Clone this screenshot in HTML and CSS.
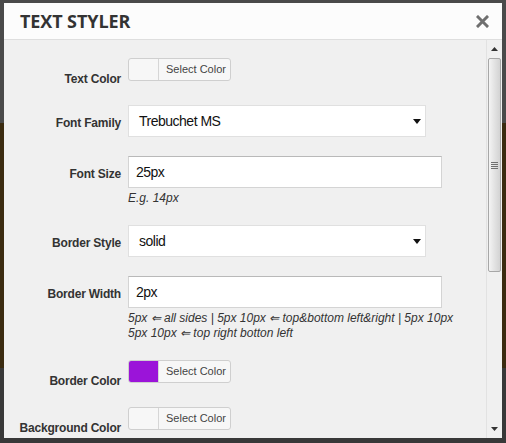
FILE: index.html
```html
<!DOCTYPE html>
<html>
<head>
<meta charset="utf-8">
<link rel="stylesheet" href="styles.css">
</head>
<body>
<div class="modal">
  <div class="modal-header">
    <h1 class="title">TEXT STYLER</h1>
    <svg class="close" width="13" height="13" viewBox="0 0 13 13"><path d="M2 2 L11 11 M11 2 L2 11" stroke="#6f6f6f" stroke-width="3" stroke-linecap="square"/></svg>
  </div>
  <div class="modal-body">
    <div class="form">
      <div class="row">
        <label class="label label-color">Text Color</label>
        <div class="control">
          <div class="picker"><span class="swatch"></span><span class="picker-text">Select Color</span></div>
        </div>
      </div>
      <div class="row">
        <label class="label">Font Family</label>
        <div class="control">
          <div class="select"><span>Trebuchet MS</span><svg width="8" height="5" viewBox="0 0 8 5"><path d="M0 0 H8 L4 5 Z" fill="#111"/></svg></div>
        </div>
      </div>
      <div class="row">
        <label class="label">Font Size</label>
        <div class="control">
          <div class="input">25px</div>
          <p class="help">E.g. 14px</p>
        </div>
      </div>
      <div class="row">
        <label class="label">Border Style</label>
        <div class="control">
          <div class="select"><span>solid</span><svg width="8" height="5" viewBox="0 0 8 5"><path d="M0 0 H8 L4 5 Z" fill="#111"/></svg></div>
        </div>
      </div>
      <div class="row">
        <label class="label">Border Width</label>
        <div class="control">
          <div class="input">2px</div>
          <p class="help">5px &lArr; all sides | 5px 10px &lArr; top&amp;bottom left&amp;right | 5px 10px<br>5px 10px &lArr; top right botton left</p>
        </div>
      </div>
      <div class="row">
        <label class="label label-color">Border Color</label>
        <div class="control">
          <div class="picker"><span class="swatch swatch-purple"></span><span class="picker-text">Select Color</span></div>
        </div>
      </div>
      <div class="row">
        <label class="label label-color">Background Color</label>
        <div class="control">
          <div class="picker"><span class="swatch"></span><span class="picker-text">Select Color</span></div>
        </div>
      </div>
    </div>
    <div class="scrollbar">
      <div class="sb-btn"><svg width="7" height="4" viewBox="0 0 7 4"><path d="M0 4 H7 L3.5 0 Z" fill="#333"/></svg></div>
      <div class="sb-thumb"><span class="grip"></span></div>
      <div class="sb-track"></div>
      <div class="sb-btn"><svg width="7" height="4" viewBox="0 0 7 4"><path d="M0 0 H7 L3.5 4 Z" fill="#333"/></svg></div>
    </div>
  </div>
</div>
</body>
</html>
```
FILE: styles.css
```css
html, body {
  margin: 0;
  padding: 0;
}
body {
  width: 506px;
  height: 443px;
  overflow: hidden;
  background: linear-gradient(to bottom, #4a4a4a 0, #4a4a4a 123px, #3b2b10 123px, #3b2b10 368px, #383838 368px);
  font-family: "Liberation Sans", Arial, sans-serif;
  padding-top: 3px;
  box-sizing: border-box;
}
.modal {
  margin: 0 4px;
  width: 498px;
  height: 435px;
  background: #f0f0f0;
  display: flex;
  flex-direction: column;
}
.modal-header {
  height: 36px;
  flex: none;
  background: #fcfcfc;
  border-bottom: 1px solid #dedede;
  display: flex;
  align-items: center;
  justify-content: space-between;
  padding: 0 13px 0 16px;
}
.title {
  margin: 0;
  font-family: "Open Sans", sans-serif;
  font-weight: 700;
  font-size: 18px;
  color: #333;
  letter-spacing: -0.1px;
}
.close {
  display: block;
  margin-top: 1px;
}
.modal-body {
  flex: 1;
  display: flex;
  min-height: 0;
}
.form {
  flex: 1;
  padding-top: 18px;
}
.row {
  display: grid;
  grid-template-columns: 117px 1fr;
  column-gap: 7px;
  margin-bottom: 19px;
}
.label {
  text-align: right;
  font-weight: 700;
  font-size: 12px;
  line-height: 17px;
  letter-spacing: -0.2px;
  color: #333;
  padding-top: 10px;
}
.label-color {
  padding-top: 13px;
  margin-bottom: -2px;
}
.control {
  display: flex;
  flex-direction: column;
  align-items: flex-start;
}
.picker {
  display: flex;
  height: 23px;
  box-sizing: border-box;
  border: 1px solid #cfcfcf;
  border-radius: 3px;
  background: #f7f7f7;
}
.swatch {
  width: 29px;
  border-right: 1px solid #d6d6d6;
  border-radius: 2px 0 0 2px;
}
.swatch-purple {
  background: #9b14d9;
}
.picker-text {
  padding: 0 4px 0 7px;
  font-size: 11px;
  line-height: 21px;
  color: #444;
}
.select, .input {
  box-sizing: border-box;
  height: 32px;
  background: #fff;
  border: 1px solid #d4d4d4;
  border-top-color: #b9b9b9;
  font-size: 14px;
  letter-spacing: -0.5px;
  color: #111;
  display: flex;
  align-items: center;
}
.select {
  width: 298px;
  padding: 0 4px 0 10px;
  justify-content: space-between;
  border-color: #e0e0e0;
}
.input {
  width: 314px;
  padding: 0 7px;
}
.help {
  margin: 3px 0 0;
  font-style: italic;
  font-size: 12px;
  line-height: 15px;
  color: #333;
}
.scrollbar {
  width: 16px;
  flex: none;
  background: #f0f0f0;
  border-left: 1px solid #e2e2e2;
  box-sizing: border-box;
  display: flex;
  flex-direction: column;
  align-items: center;
}
.sb-btn {
  height: 18px;
  width: 100%;
  display: flex;
  align-items: center;
  justify-content: center;
  flex: none;
}
.sb-thumb {
  flex: none;
  width: 13px;
  height: 214px;
  box-sizing: border-box;
  border: 1px solid #a7a7a7;
  border-radius: 2px;
  background: linear-gradient(to right, #f4f4f4 0, #e6e6e6 40%, #d3d3d3 100%);
  display: flex;
  align-items: center;
  justify-content: center;
}
.grip {
  width: 7px;
  height: 7px;
  background: repeating-linear-gradient(to bottom, #707070 0, #707070 1px, transparent 1px, transparent 2px);
}
.sb-track {
  flex: 1;
}
```
